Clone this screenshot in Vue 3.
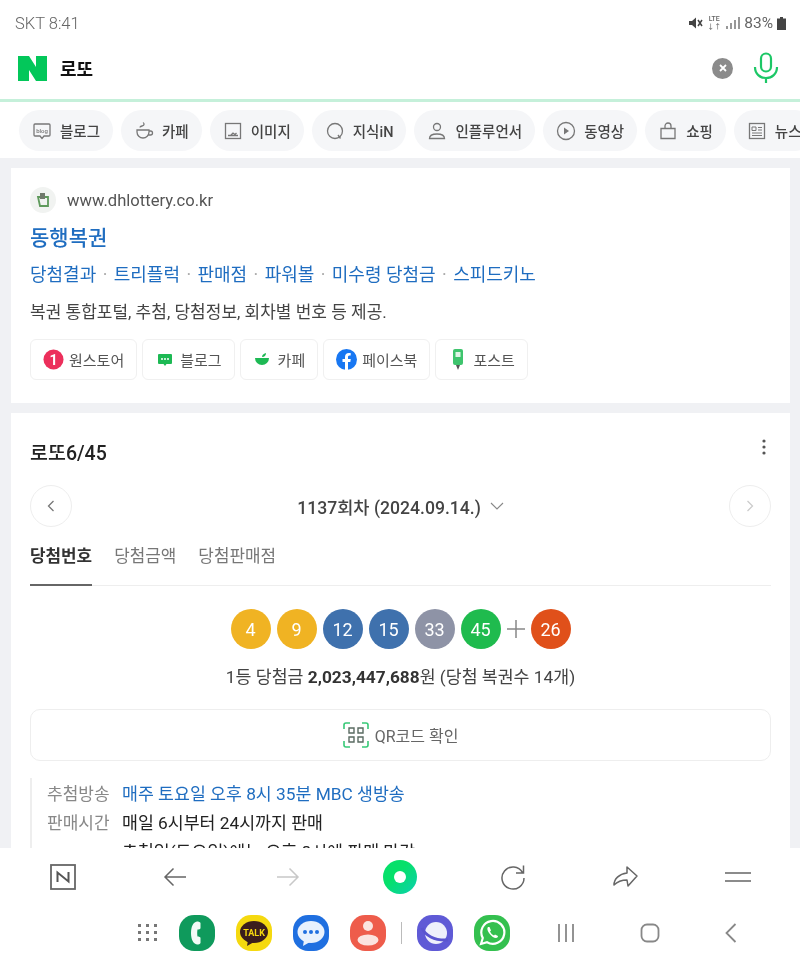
<script setup>
const navChips = [
  { label: "블로그", icon: "blog" },
  { label: "카페", icon: "cafe" },
  { label: "이미지", icon: "image" },
  { label: "지식iN", icon: "kin" },
  { label: "인플루언서", icon: "person" },
  { label: "동영상", icon: "video" },
  { label: "쇼핑", icon: "shop" },
  { label: "뉴스", icon: "news" },
];

const siteLinks = ["당첨결과", "트리플럭", "판매점", "파워볼", "미수령 당첨금", "스피드키노"];

const socials = [
  { label: "원스토어", icon: "one" },
  { label: "블로그", icon: "blog" },
  { label: "카페", icon: "cafe" },
  { label: "페이스북", icon: "fb" },
  { label: "포스트", icon: "post" },
];

const balls = [
  { n: 4, color: "#f0b323" },
  { n: 9, color: "#f0b323" },
  { n: 12, color: "#3f71ad" },
  { n: 15, color: "#3f71ad" },
  { n: 33, color: "#8e93a6" },
  { n: 45, color: "#1fbb4e" },
];
</script>

<template>
  <div class="phone">
    <!-- 상태바 -->
    <div class="status">
      <span class="status__left">SKT 8:41</span>
      <div class="status__right">
        <svg width="15" height="14" viewBox="0 0 15 14">
          <path d="M1 5h3l4-3.500v11L4 9H1z" fill="#444" />
          <path d="M10 4l4 6M14 4l-4 6" stroke="#444" stroke-width="1.500" />
        </svg>
        <span class="status__lte">LTE<br />↓↑</span>
        <svg width="15" height="14" viewBox="0 0 15 14">
          <path d="M2 10v3M6 7v6M10 4v9M14 1v12" stroke="#777" stroke-width="1.500" />
        </svg>
        <span class="status__pct">83%</span>
        <svg width="9" height="13" viewBox="0 0 9 13">
          <path d="M3 0h3v1.500h3V13H0V1.500h3z" fill="#444" />
        </svg>
      </div>
    </div>

    <!-- 검색창 -->
    <div class="search">
      <svg class="search__logo" width="29" height="25" viewBox="0 0 29 25">
        <path d="M0 0h11l7 11V0h11v25H18l-7-11v11H0z" fill="#03c75a" />
      </svg>
      <span class="search__query">로또</span>
      <span class="search__clear">
        <svg width="10" height="10" viewBox="0 0 10 10">
          <path d="M2 2l6 6M8 2l-6 6" stroke="#fff" stroke-width="1.800" />
        </svg>
      </span>
      <svg class="search__mic" width="26" height="32" viewBox="0 0 26 32" fill="none" stroke="#1cc766" stroke-width="2.200">
        <rect x="8" y="1.500" width="10" height="18" rx="5" />
        <path d="M2 15c0 7 5 11 11 11s11-4 11-11M13 26v5" />
      </svg>
    </div>

    <!-- 카테고리 칩 -->
    <div class="tabs">
      <div v-for="chip in navChips" :key="chip.label" class="tabs__chip">
        <svg width="20" height="20" viewBox="0 0 20 20" fill="none" stroke="#777" stroke-width="1.300">
          <template v-if="chip.icon === 'blog'">
            <path d="M3 3h14a1 1 0 0 1 1 1v10a1 1 0 0 1-1 1h-5l-2 2.500L8 15H3a1 1 0 0 1-1-1V4a1 1 0 0 1 1-1z" />
            <text x="10" y="11.500" text-anchor="middle" font-size="6" stroke="none" fill="#777" font-family="Roboto, sans-serif">blog</text>
          </template>
          <template v-else-if="chip.icon === 'cafe'">
            <path d="M3 9h12v2a6 6 0 0 1-12 0zM15 10h1.500a2 2 0 0 1 0 4H14M6 6.500c0-2 4-1 4-3s-1-1.500-1-1.500" />
          </template>
          <template v-else-if="chip.icon === 'image'">
            <rect x="2.500" y="2.500" width="15" height="15" />
            <path d="M5 14.500h10M8 14l2-2 2 1.500 1.500-1.500" />
          </template>
          <template v-else-if="chip.icon === 'kin'">
            <circle cx="10" cy="10" r="7.500" />
            <path d="M13 14l2.500 3.500" />
          </template>
          <template v-else-if="chip.icon === 'person'">
            <circle cx="10" cy="6" r="3.500" />
            <path d="M2.500 17.500c0-3 3-4.500 7.500-4.500s7.500 1.500 7.500 4.500z" />
          </template>
          <template v-else-if="chip.icon === 'video'">
            <circle cx="10" cy="10" r="8.500" />
            <path d="M8 6.500l5 3.500-5 3.500z" fill="#777" stroke="none" />
          </template>
          <template v-else-if="chip.icon === 'shop'">
            <path d="M3 7.500h14v10H3zM7 7.500V5a3 3 0 0 1 6 0v2.500" />
          </template>
          <template v-else>
            <rect x="2.500" y="2.500" width="15" height="15" />
            <path d="M5 6h4v3.500H5zM11 6.500h4M11 9h4M5 12h10M5 14.500h10" stroke-width="1" />
          </template>
        </svg>
        <span>{{ chip.label }}</span>
      </div>
    </div>

    <main class="results">
      <!-- 사이트 카드 -->
      <section class="card site">
        <div class="site__url">
          <span class="site__favicon">
            <svg width="14" height="16" viewBox="0 0 14 16">
              <path d="M2 5h10v9H4z" fill="none" stroke="#5f9a5c" stroke-width="1.800" />
              <path d="M4 1h5v6H4z" fill="#70796c" />
            </svg>
          </span>
          <span>www.dhlottery.co.kr</span>
        </div>
        <h2 class="site__title">동행복권</h2>
        <div class="site__links">
          <template v-for="(link, i) in siteLinks" :key="link">
            <span v-if="i" class="site__dot">·</span>
            <span>{{ link }}</span>
          </template>
        </div>
        <p class="site__desc">복권 통합포털, 추첨, 당첨정보, 회차별 번호 등 제공.</p>
        <div class="site__socials">
          <div v-for="s in socials" :key="s.label" class="site__social">
            <span class="site__social-icon">
              <svg v-if="s.icon === 'one'" width="21" height="21" viewBox="0 0 22 22">
                <circle cx="11" cy="11" r="10.500" fill="#ec2f5b" />
                <text x="11" y="16.500" text-anchor="middle" font-size="15" font-weight="700" fill="#fff" font-family="Roboto, sans-serif">1</text>
              </svg>
              <svg v-else-if="s.icon === 'blog'" width="16" height="16" viewBox="0 0 16 16">
                <path d="M2 2h12a1 1 0 0 1 1 1v8a1 1 0 0 1-1 1h-4.500L8 14l-1.500-2H2a1 1 0 0 1-1-1V3a1 1 0 0 1 1-1z" fill="#1db954" />
                <path d="M4 7h8" stroke="#fff" stroke-width="1.500" stroke-dasharray="2 1" />
              </svg>
              <svg v-else-if="s.icon === 'cafe'" width="17" height="16" viewBox="0 0 17 16">
                <path d="M1 6h14a7 7 0 0 1-14 0z" fill="#1db954" />
                <path d="M8 5c0-2 1-3 4-4 0 2-1 4-4 4z" fill="#1db954" />
              </svg>
              <svg v-else-if="s.icon === 'fb'" width="21" height="21" viewBox="0 0 21 21">
                <circle cx="10.500" cy="10.500" r="10.500" fill="#1877f2" />
                <path d="M9 21v-8H6.500v-3H9V8c0-2.500 1.500-4 3.800-4 1 0 1.900.1 1.900.1v2.500h-1.200c-1.200 0-1.500.8-1.500 1.500V10h2.800l-.5 3h-2.300v8z" fill="#fff" />
              </svg>
              <svg v-else width="14" height="24" viewBox="0 0 14 24">
                <rect x="2" y="1" width="10" height="16" rx="2" fill="#3ec46d" />
                <rect x="4.500" y="4" width="5" height="5" fill="#dff5e6" />
                <path d="M5 17h4l-2 5z" fill="#555" />
              </svg>
            </span>
            <span>{{ s.label }}</span>
          </div>
        </div>
      </section>

      <!-- 로또 카드 -->
      <section class="card lotto">
        <div class="lotto__head">
          <h2>로또6/45</h2>
          <svg width="4" height="16" viewBox="0 0 4 16">
            <circle cx="2" cy="2" r="1.600" fill="#555" />
            <circle cx="2" cy="8" r="1.600" fill="#555" />
            <circle cx="2" cy="14" r="1.600" fill="#555" />
          </svg>
        </div>

        <div class="lotto__round">
          <span class="lotto__arrow">
            <svg width="8" height="12" viewBox="0 0 8 12" fill="none" stroke="#777" stroke-width="1.300">
              <path d="M6.500 1L1.500 6l5 5" />
            </svg>
          </span>
          <div class="lotto__date">
            <span>1137회차 (2024.09.14.)</span>
            <svg width="14" height="8" viewBox="0 0 14 8" fill="none" stroke="#888" stroke-width="1.100">
              <path d="M1 1l6 6 6-6" />
            </svg>
          </div>
          <span class="lotto__arrow">
            <svg width="8" height="12" viewBox="0 0 8 12" fill="none" stroke="#ccc" stroke-width="1.300">
              <path d="M1.500 1l5 5-5 5" />
            </svg>
          </span>
        </div>

        <div class="lotto__tabs">
          <span class="lotto__tab lotto__tab--on">당첨번호</span>
          <span class="lotto__tab">당첨금액</span>
          <span class="lotto__tab">당첨판매점</span>
        </div>

        <div class="lotto__balls">
          <span v-for="b in balls" :key="b.n" class="lotto__ball" :style="{ background: b.color }">{{ b.n }}</span>
          <svg width="18" height="18" viewBox="0 0 18 18">
            <path d="M9 0v18M0 9h18" stroke="#888" stroke-width="1.500" />
          </svg>
          <span class="lotto__ball" :style="{ background: '#e0501a' }">26</span>
        </div>

        <p class="lotto__prize">1등 당첨금 <b>2,023,447,688</b>원 (당첨 복권수 14개)</p>

        <div class="lotto__qr">
          <svg width="26" height="26" viewBox="0 0 26 26" fill="none" stroke="#37c977" stroke-width="1.600">
            <path d="M1 7V3a2 2 0 0 1 2-2h4M19 1h4a2 2 0 0 1 2 2v4M25 19v4a2 2 0 0 1-2 2h-4M7 25H3a2 2 0 0 1-2-2v-4" />
            <path d="M6 6h5v5H6zM15 6h5v5h-5zM6 15h5v5H6zM15 15h5v5h-5z" stroke="#5a6b62" stroke-width="1.400" />
          </svg>
          <span>QR코드 확인</span>
        </div>

        <dl class="lotto__info">
          <div class="lotto__row">
            <dt>추첨방송</dt>
            <dd class="lotto__row-link">매주 토요일 오후 8시 35분 MBC 생방송</dd>
          </div>
          <div class="lotto__row">
            <dt>판매시간</dt>
            <dd>매일 6시부터 24시까지 판매</dd>
          </div>
          <div class="lotto__row">
            <dt></dt>
            <dd>추첨일(토요일)에는 오후 8시에 판매 마감</dd>
          </div>
        </dl>
      </section>
    </main>

    <!-- 하단 브라우저 툴바 -->
    <div class="toolbar">
      <svg width="26" height="26" viewBox="0 0 26 26" fill="none">
        <rect x="1" y="1" width="24" height="24" stroke="#666" stroke-width="1.800" />
        <path d="M7.500 18V8.500L18.500 17.500V8" stroke="#555" stroke-width="2" />
      </svg>
      <svg width="24" height="20" viewBox="0 0 24 20" fill="none" stroke="#666" stroke-width="1.500">
        <path d="M23 10H2M10.500 1.500L2 10l8.500 8.500" />
      </svg>
      <svg width="24" height="20" viewBox="0 0 24 20" fill="none" stroke="#c8c8c8" stroke-width="1.500">
        <path d="M1 10h21M13.500 1.500L22 10l-8.500 8.500" />
      </svg>
      <span class="toolbar__green"></span>
      <svg width="26" height="26" viewBox="0 0 26 26" fill="none" stroke="#666" stroke-width="1.500">
        <path d="M22.500 8.500A11 11 0 1 0 24 14M23.500 1.500v7.500H16" />
      </svg>
      <svg width="28" height="24" viewBox="0 0 28 24" fill="none" stroke="#666" stroke-width="1.500" stroke-linejoin="round">
        <path d="M16 2l10 9-9 10-1-6c-5 0-9 1-13 5 0-6 5-11 13-12z" />
      </svg>
      <svg width="26" height="12" viewBox="0 0 26 12">
        <path d="M0 2h26M0 10h26" stroke="#666" stroke-width="1.700" />
      </svg>
    </div>

    <!-- 안드로이드 독 -->
    <div class="dock">
      <svg class="dock__grid" width="20" height="20" viewBox="0 0 20 20">
        <g fill="#777">
          <rect x="0" y="1" width="3" height="3" /><rect x="8" y="1" width="3" height="3" /><rect x="16" y="1" width="3" height="3" />
          <rect x="0" y="8" width="3" height="3" /><rect x="8" y="8" width="3" height="3" /><rect x="16" y="8" width="3" height="3" />
          <rect x="0" y="15" width="3" height="3" /><rect x="8" y="15" width="3" height="3" /><rect x="16" y="15" width="3" height="3" />
        </g>
      </svg>
      <span class="dock__app dock__app--phone">
        <svg width="14" height="24" viewBox="0 0 14 24">
          <path d="M7 0.500c1.500 0 3 .5 3.500 1.500v5c0 1-1.500 1.500-3 1.500-.4 2-.4 5 0 7 1.500 0 3 .5 3 1.500v5c-.5 1-2 1.500-3.500 1.500C3 23 1 18 1 12S3 1 7 0.500z" fill="#f3fbf6" />
        </svg>
      </span>
      <span class="dock__app dock__app--kakao">
        <svg width="30" height="27" viewBox="0 0 30 27">
          <ellipse cx="15" cy="12" rx="14" ry="11" fill="#3a1d1d" />
          <path d="M9 20l-1 6 7-4z" fill="#3a1d1d" />
          <text x="15" y="15.500" text-anchor="middle" font-size="9" font-weight="700" fill="#f5d90f" font-family="Roboto, sans-serif">TALK</text>
        </svg>
      </span>
      <span class="dock__app dock__app--msg">
        <svg width="28" height="26" viewBox="0 0 28 26">
          <ellipse cx="14" cy="12" rx="13.500" ry="11" fill="#e8f1fd" />
          <path d="M7 20l-1 6 7-4z" fill="#e8f1fd" />
          <circle cx="8" cy="12" r="2" fill="#1f6fe0" />
          <circle cx="14" cy="12" r="2" fill="#1f6fe0" />
          <circle cx="20" cy="12" r="2" fill="#1f6fe0" />
        </svg>
      </span>
      <span class="dock__app dock__app--contact">
        <svg width="22" height="26" viewBox="0 0 22 26">
          <circle cx="11" cy="6" r="5" fill="#fbe3df" />
          <ellipse cx="11" cy="20" rx="10.500" ry="5.500" fill="#fbe3df" />
        </svg>
      </span>
      <span class="dock__sep"></span>
      <span class="dock__app dock__app--internet">
        <svg width="30" height="30" viewBox="0 0 30 30" fill="none">
          <circle cx="16" cy="15" r="11" fill="#eef0fb" />
          <path d="M2 10c3 7 12 13 26 12" stroke="#5a55cf" stroke-width="3" />
        </svg>
      </span>
      <span class="dock__app dock__app--whatsapp">
        <svg width="28" height="28" viewBox="0 0 28 28" fill="none">
          <path d="M3 25l1.800-6A11.500 11.500 0 1 1 9 23.300z" stroke="#fff" stroke-width="2.200" />
          <path d="M10 8c-1 1-1 3 1 6s5 5 7 5c1 0 2-1 2-2l-3-1.500-1 1c-2-1-3-2-4-4l1-1-1.500-3.500z" fill="#fff" />
        </svg>
      </span>
      <svg class="dock__recent" width="18" height="18" viewBox="0 0 18 18">
        <path d="M2 0v18M9 0v18M16 0v18" stroke="#888" stroke-width="1.800" />
      </svg>
      <svg class="dock__home" width="20" height="20" viewBox="0 0 20 20">
        <rect x="1.500" y="1.500" width="17" height="17" rx="5.500" fill="none" stroke="#888" stroke-width="1.800" />
      </svg>
      <svg width="12" height="20" viewBox="0 0 12 20">
        <path d="M10.500 1L1.500 10l9 9" fill="none" stroke="#888" stroke-width="1.800" />
      </svg>
    </div>
  </div>
</template>

<style>
html,
body {
  margin: 0;
  background: #fff;
}
</style>

<style scoped>
.phone {
  width: 800px;
  height: 961px;
  display: flex;
  flex-direction: column;
  overflow: hidden;
  background: #fff;
  font-family: Roboto, "Noto Sans CJK KR", sans-serif;
  color: #222;
  /* 원본 캡처가 살짝 흐릿함 */
  filter: blur(0.45px);
}

/* 상태바 */
.status {
  flex: none;
  height: 46px;
  padding: 0 14px 0 15px;
  display: flex;
  align-items: center;
  justify-content: space-between;
  color: #666;
}

.status__left {
  font-size: 16.500px;
  font-weight: 300;
}

.status__right {
  display: flex;
  align-items: center;
  gap: 4px;
}

.status__lte {
  font-size: 7px;
  line-height: 8px;
  text-align: center;
  font-weight: 500;
}

.status__pct {
  font-size: 15.500px;
}

/* 검색창 */
.search {
  flex: none;
  height: 44px;
  padding: 0 21px 9px 18px;
  display: flex;
  align-items: center;
  border-bottom: 3px solid #c5f0da;
}

.search__query {
  margin-left: 13px;
  font-size: 18px;
  font-weight: 700;
  color: #111;
  flex: 1;
}

.search__clear {
  width: 21px;
  height: 21px;
  border-radius: 50%;
  background: #8b8b8b;
  display: flex;
  align-items: center;
  justify-content: center;
}

.search__mic {
  margin-left: 20px;
}

/* 카테고리 칩 */
.tabs {
  flex: none;
  height: 56px;
  padding: 8px 0 7px 19px;
  box-sizing: border-box;
  display: flex;
  gap: 8px;
  overflow: hidden;
}

.tabs__chip {
  flex: none;
  height: 41px;
  padding: 0 13px;
  display: flex;
  align-items: center;
  gap: 8px;
  border-radius: 21px;
  background: #f5f6f8;
  font-size: 14.500px;
  font-weight: 500;
  color: #444;
}

/* 결과 영역 */
.results {
  flex: 1;
  min-height: 0;
  overflow: hidden;
  padding: 10px 10px 0 11px;
  background: #f0f1f4;
  display: flex;
  flex-direction: column;
  gap: 10px;
}

.card {
  flex: none;
  background: #fff;
  padding: 0 19px;
}

/* 사이트 카드 */
.site {
  padding-top: 19px;
  padding-bottom: 23px;
}

.site__url {
  display: flex;
  align-items: center;
  gap: 11px;
  height: 26px;
  font-size: 16.600px;
  color: #555;
}

.site__favicon {
  width: 26px;
  height: 26px;
  border-radius: 50%;
  background: #f1f3f1;
  display: flex;
  align-items: center;
  justify-content: center;
}

.site__title {
  margin: 10px 0 0;
  font-size: 21px;
  line-height: 30px;
  font-weight: 500;
  color: #1f6dc0;
}

.site__links {
  margin-top: 10px;
  display: flex;
  align-items: center;
  gap: 6.400px;
  font-size: 18px;
  line-height: 24px;
  color: #1f6dc0;
}

.site__dot {
  color: #aaa;
}

.site__desc {
  margin: 13px 0 0;
  font-size: 17px;
  line-height: 24px;
  color: #444;
}

.site__socials {
  margin-top: 15px;
  display: flex;
  gap: 5px;
}

.site__social {
  height: 41px;
  box-sizing: border-box;
  padding: 0 12px;
  display: flex;
  align-items: center;
  gap: 5px;
  border: 1px solid #f0f0f0;
  border-radius: 6px;
  font-size: 15px;
  color: #555;
}

.site__social-icon {
  min-width: 20px;
  display: flex;
  justify-content: center;
}

/* 로또 카드 */
.lotto {
  padding-top: 26px;
  padding-bottom: 40px;
}

.lotto__head {
  display: flex;
  align-items: flex-start;
  justify-content: space-between;
  padding-right: 5px;
  height: 30px;
}

.lotto__head h2 {
  margin: 2px 0 0;
  font-size: 19.500px;
  line-height: 26px;
  font-weight: 500;
  color: #222;
}

.lotto__round {
  margin-top: 16px;
  display: flex;
  align-items: center;
  justify-content: space-between;
}

.lotto__arrow {
  width: 42px;
  height: 42px;
  box-sizing: border-box;
  border: 1px solid #eee;
  border-radius: 50%;
  display: flex;
  align-items: center;
  justify-content: center;
}

.lotto__date {
  display: flex;
  align-items: center;
  gap: 9px;
  font-size: 17.600px;
  font-weight: 500;
  color: #444;
}

.lotto__tabs {
  margin-top: 14px;
  display: flex;
  gap: 22px;
  border-bottom: 1px solid #eee;
}

.lotto__tab {
  height: 45px;
  padding-top: 4px;
  box-sizing: border-box;
  font-size: 16.900px;
  line-height: 22px;
  color: #777;
  margin-bottom: -1px;
}

.lotto__tab--on {
  font-weight: 700;
  color: #333;
  border-bottom: 2px solid #666;
}

.lotto__balls {
  margin-top: 23px;
  display: flex;
  justify-content: center;
  align-items: center;
  gap: 6px;
}

.lotto__ball {
  width: 40px;
  height: 40px;
  border-radius: 50%;
  display: flex;
  align-items: center;
  justify-content: center;
  color: #fff;
  font-size: 18px;
}

.lotto__prize {
  margin: 16px 0 0;
  text-align: center;
  font-size: 17.300px;
  line-height: 24px;
  color: #444;
}

.lotto__prize b {
  font-weight: 700;
  color: #333;
}

.lotto__qr {
  margin-top: 20px;
  height: 52px;
  box-sizing: border-box;
  border: 1px solid #eee;
  border-radius: 10px;
  display: flex;
  align-items: center;
  justify-content: center;
  gap: 6px;
  font-size: 16px;
  color: #666;
}

.lotto__info {
  margin: 17px 0 0;
  padding-left: 15px;
  border-left: 2px solid #eee;
  font-size: 17px;
}

.lotto__row {
  display: flex;
  height: 29px;
  align-items: center;
}

.lotto__row dt {
  width: 75px;
  flex: none;
  color: #888;
}

.lotto__row dd {
  margin: 0;
  color: #222;
  font-size: 17.300px;
}

.lotto__row dd.lotto__row-link {
  color: #1f6dc0;
}

/* 하단 툴바 */
.toolbar {
  flex: none;
  height: 57px;
  box-sizing: border-box;
  padding-left: 6.500px;
  background: #fff;
  display: grid;
  grid-template-columns: repeat(7, 112.500px);
  align-items: center;
  justify-items: center;
}

.toolbar__green {
  width: 34px;
  height: 34px;
  border-radius: 50%;
  background: linear-gradient(135deg, #06e06a 40%, #0cd0b0 100%);
  display: flex;
  align-items: center;
  justify-content: center;
}

.toolbar__green::after {
  content: "";
  width: 12px;
  height: 12px;
  border-radius: 50%;
  background: #fff;
}

/* 독 */
.dock {
  flex: none;
  height: 56px;
  box-sizing: border-box;
  padding-left: 138px;
  display: flex;
  align-items: center;
  background: #fff;
}

.dock__grid {
  margin-right: 21px;
}

.dock__app {
  width: 36px;
  height: 36px;
  flex: none;
  border-radius: 42%;
  margin-right: 21px;
  display: flex;
  align-items: center;
  justify-content: center;
}

.dock__app--phone {
  background: #0f9a5c;
}

.dock__app--kakao {
  background: #f5d90f;
}

.dock__app--msg {
  background: #1f6fe0;
}

.dock__app--contact {
  background: #ee5c4b;
  margin-right: 15px;
}

.dock__app--internet {
  background: #5f5ad6;
}

.dock__app--whatsapp {
  background: #34c04f;
  margin-right: 47px;
}

.dock__sep {
  width: 1px;
  height: 22px;
  background: #bbb;
  margin-right: 15px;
}

.dock__recent {
  margin-right: 65px;
}

.dock__home {
  margin-right: 65px;
}
</style>
